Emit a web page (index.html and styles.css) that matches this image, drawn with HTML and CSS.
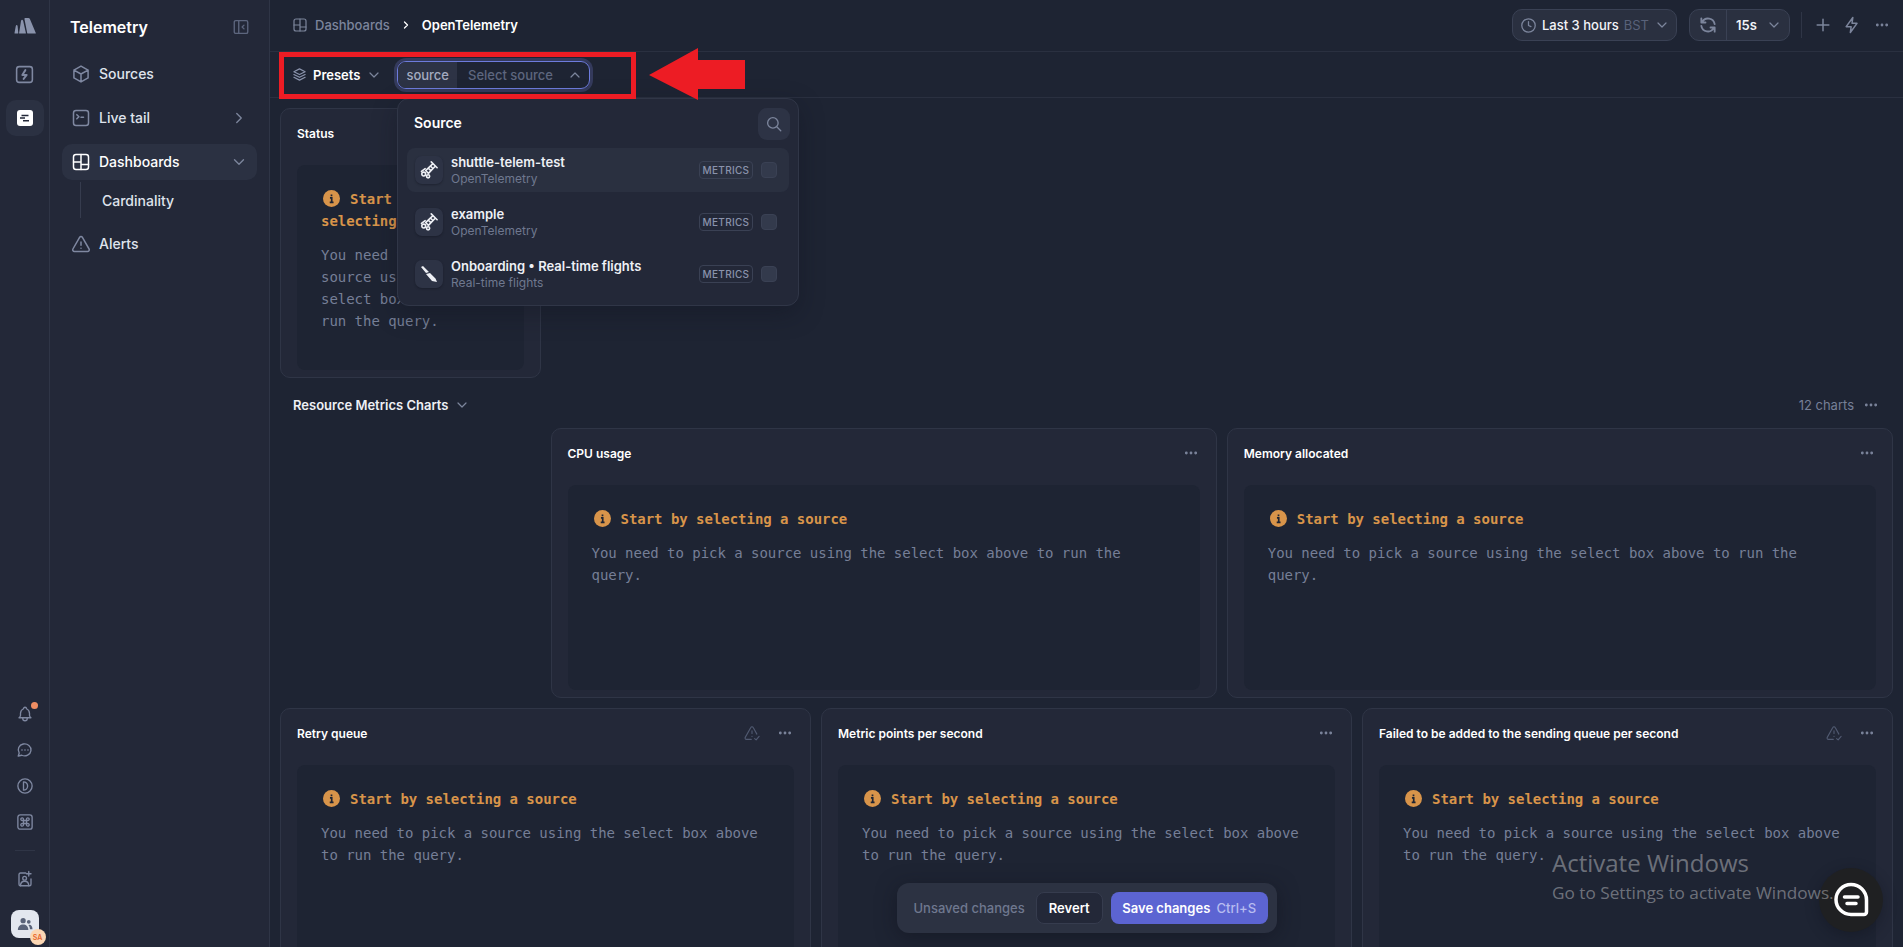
FILE: index.html
```html
<!DOCTYPE html>
<html lang="en">
<head>
    <meta charset="UTF-8">
    <title>OpenTelemetry - Dashboards</title>
    <link rel="stylesheet" href="styles.css">
</head>
<body>
    <svg class="sprite" width="0" height="0">
        <symbol id="i-grid" viewBox="0 0 24 24"><rect x="3" y="3" width="18" height="18" rx="3"/><path d="M12 3v18M3 12h9M12 15h9"/></symbol>
        <symbol id="i-chev-r" viewBox="0 0 24 24"><path d="M9 6l6 6-6 6"/></symbol>
        <symbol id="i-chev-d" viewBox="0 0 24 24"><path d="M6 9l6 6 6-6"/></symbol>
        <symbol id="i-chev-u" viewBox="0 0 24 24"><path d="M6 15l6-6 6 6"/></symbol>
        <symbol id="i-dots" viewBox="0 0 24 24"><circle cx="5" cy="12" r="1.200" fill="currentColor"/><circle cx="12" cy="12" r="1.200" fill="currentColor"/><circle cx="19" cy="12" r="1.200" fill="currentColor"/></symbol>
        <symbol id="i-warn" viewBox="0 0 24 24"><path d="M12 9v3.500M12 16.500v.1M11 20.500H4.500a1.800 1.800 0 0 1-1.500-2.700L10.400 4.600a1.800 1.800 0 0 1 3.200 0L18.500 13.500M15.500 19.500l2 1.700 4-4.700"/></symbol>
        <symbol id="i-info" viewBox="0 0 24 24"><circle cx="12" cy="12" r="12" fill="#d8944a" stroke="none"/><path d="M12 6.300v2.400M9.800 11h2.500v6.500M9.500 17.500h5.400" stroke="#1e2433" stroke-width="2.400" fill="none"/></symbol>
        <symbol id="i-otel" viewBox="0 0 16 16"><path d="M10 .8l5.200 5.200M11.500 2.300L5 8.500l2.500 2.500 6.200-6.500M9.300 4.500l2.200 2.200M7.400 6.400l2.200 2.200"/><circle cx="3.300" cy="11.600" r="1.700"/><circle cx="7.200" cy="13.600" r="1.400"/><path d="M1.300 9.300L4.600 6.800"/></symbol>
    </svg>

    <nav class="rail">
        <svg class="rail-logo" viewBox="0 0 22 16"><path d="M.5 15L1.800 8c.3-1.400 1.500-1.400 1.800 0l.7 7c0 .4-.2.600-.6.600H1.100c-.4 0-.7-.2-.6-.6z"/><path d="M5.100 15L7 3c.3-1.600 1.800-1.600 2.200 0l2.700 12c.1.400-.1.600-.5.600H5.600c-.4 0-.6-.2-.5-.6z"/><path d="M13.200 15L10.500 1.300C10.300.4 10.700 0 11.500 0h2.800c.8 0 1.300.3 1.600 1L21.800 15c.2.400 0 .6-.4.600h-7.600c-.3 0-.5-.2-.6-.6z"/></svg>
        <a class="rail-btn rail-btn-first">
            <svg class="icon" viewBox="0 0 24 24"><rect x="3" y="3" width="18" height="18" rx="3"/><path d="M13 7l-3.500 5.500h5L11 17" stroke-width="2.200"/></svg>
        </a>
        <a class="rail-btn active">
            <svg class="rail-mark" viewBox="0 0 16 16"><rect width="16" height="16" rx="3" fill="#fff"/><path d="M4.500 5.500h7M3 8h5M6 10.800h6" stroke="#232838" stroke-width="1.500"/></svg>
        </a>
        <div class="rail-spacer"></div>
        <a class="rail-btn rail-small bell">
            <svg class="icon" viewBox="0 0 24 24"><path d="M10 5a2 2 0 1 1 4 0 7 7 0 0 1 4 6v3a4 4 0 0 0 2 3H4a4 4 0 0 0 2-3v-3a7 7 0 0 1 4-6M9 17v1a3 3 0 0 0 6 0v-1"/></svg>
        </a>
        <a class="rail-btn rail-small">
            <svg class="icon" viewBox="0 0 24 24"><path d="M3 20l1.300-3.900A8.500 8 0 1 1 7.700 19z"/><path d="M8 12v.01M12 12v.01M16 12v.01" stroke-width="2.200"/></svg>
        </a>
        <a class="rail-btn rail-small">
            <svg class="icon" viewBox="0 0 24 24"><circle cx="12" cy="12" r="9.500"/><path d="M10 6.500a5.500 5.500 0 0 1 0 11z"/></svg>
        </a>
        <a class="rail-btn rail-small">
            <svg class="icon" viewBox="0 0 24 24"><rect x="2.500" y="2.500" width="19" height="19" rx="3"/><path d="M10 10V8.500A1.800 1.800 0 1 0 8.500 10H15.500A1.800 1.800 0 1 0 14 8.500V15.500A1.800 1.800 0 1 0 15.500 14H8.500A1.800 1.800 0 1 0 10 15.500z" stroke-width="1.800"/></svg>
        </a>
        <div class="rail-line"></div>
        <a class="rail-btn rail-small">
            <svg class="icon" viewBox="0 0 24 24"><path d="M13 4H6a2 2 0 0 0-2 2v13a2 2 0 0 0 2 2h12a2 2 0 0 0 2-2v-7M17 2v6M14 5h6"/><circle cx="11.500" cy="11" r="2.500"/><path d="M6 21c0-4 2.500-6 5.500-6s5.500 2 5.500 6"/></svg>
        </a>
        <div class="avatar">
            <svg viewBox="0 0 24 24" width="18" height="18"><circle cx="9.500" cy="7.500" r="3.500"/><circle cx="17" cy="9" r="2.500"/><path d="M2.500 20c0-5 3-7.500 7-7.500s7 2.500 7 7.500zM17.500 13c3 0 4.500 2.500 4.500 6h-3.500c0-2.300-.5-4.200-2-5.800z"/></svg>
            <span class="avatar-badge">SA</span>
        </div>
    </nav>

    <aside class="sidebar">
        <div class="side-title">
            <span>Telemetry</span>
            <svg class="icon collapse" viewBox="0 0 24 24"><rect x="3" y="3.500" width="18" height="17" rx="2"/><path d="M9 3.500v17M16 9.500l-2.500 2.500 2.500 2.500"/></svg>
        </div>
        <a class="nav-item">
            <svg class="icon" viewBox="0 0 24 24"><path d="M12 2.500l8.500 4.800v9.400L12 21.500l-8.500-4.800V7.300zM3.500 7.300L12 12l8.500-4.700M12 12v9.500"/></svg>
            <span>Sources</span>
        </a>
        <a class="nav-item">
            <svg class="icon" viewBox="0 0 24 24"><rect x="3" y="3" width="18" height="18" rx="3"/><path d="M7 8l2.500 2.500L7 13M12 11h3"/></svg>
            <span>Live tail</span>
            <svg class="icon chev"><use href="#i-chev-r"/></svg>
        </a>
        <a class="nav-item current">
            <svg class="icon"><use href="#i-grid"/></svg>
            <span>Dashboards</span>
            <svg class="icon chev"><use href="#i-chev-d"/></svg>
        </a>
        <div class="nav-sub"><a>Cardinality</a></div>
        <a class="nav-item">
            <svg class="icon" viewBox="0 0 24 24"><path d="M10.300 4l-8 14A2 2 0 0 0 4 21h16a2 2 0 0 0 1.700-3l-8-14a2 2 0 0 0-3.400 0zM12 9.500v4M12 17v.1"/></svg>
            <span>Alerts</span>
        </a>
    </aside>

    <main class="main">
        <header class="topbar">
            <svg class="icon crumb-icon"><use href="#i-grid"/></svg>
            <span class="crumb">Dashboards</span>
            <svg class="icon crumb-sep"><use href="#i-chev-r"/></svg>
            <span class="crumb-now">OpenTelemetry</span>
            <div class="top-right">
                <button class="pill time">
                    <svg class="icon" viewBox="0 0 24 24"><circle cx="12" cy="12" r="9.500"/><path d="M12 6.500V12l3.500 1.500"/></svg>
                    <span class="pill-text">Last 3 hours</span>
                    <span class="pill-dim">BST</span>
                    <svg class="icon chev"><use href="#i-chev-d"/></svg>
                </button>
                <div class="pill refresh">
                    <span class="refresh-icon">
                        <svg class="icon" viewBox="0 0 24 24"><path d="M20 11A8 8 0 0 0 5 8.500M4 4v5h5M4 13a8 8 0 0 0 15 2.500M20 20v-5h-5" stroke-width="2.200"/></svg>
                    </span>
                    <span class="refresh-rate">
                        <span class="pill-text bold">15s</span>
                        <svg class="icon chev"><use href="#i-chev-d"/></svg>
                    </span>
                </div>
                <div class="top-line"></div>
                <svg class="icon top-act" viewBox="0 0 24 24"><path d="M12 5v14M5 12h14"/></svg>
                <svg class="icon top-act" viewBox="0 0 24 24"><path d="M13 3L5 14h6l-1 7 8-11h-6z"/></svg>
                <svg class="icon top-dots dots"><use href="#i-dots"/></svg>
            </div>
        </header>

        <div class="presetbar">
            <svg class="icon layers" viewBox="0 0 24 24"><path d="M12 3l9 4.500-9 4.500-9-4.500zM3 12l9 4.500 9-4.500M3 16.500l9 4.500 9-4.500"/></svg>
            <span class="presets-label">Presets</span>
            <svg class="icon chev"><use href="#i-chev-d"/></svg>
            <div class="source-field">
                <span class="source-tag">source</span>
                <span class="source-value">Select source</span>
                <svg class="icon chev"><use href="#i-chev-u"/></svg>
            </div>
        </div>

        <div class="content">
            <div class="grid">
                <section class="card span-2">
                    <div class="card-head"><h3>Status</h3></div>
                    <div class="card-body">
                        <p class="prompt"><svg class="info"><use href="#i-info"/></svg>Start by selecting a source</p>
                        <p class="hint">You need to pick a source using the select box above to run the query.</p>
                    </div>
                </section>
            </div>

            <div class="section-head">
                <h2>Resource Metrics Charts</h2>
                <svg class="icon chev"><use href="#i-chev-d"/></svg>
                <span class="section-count">12 charts</span>
                <svg class="icon dots"><use href="#i-dots"/></svg>
            </div>

            <div class="grid">
                <section class="card span-5 offset-2">
                    <div class="card-head"><h3>CPU usage</h3><svg class="icon dots"><use href="#i-dots"/></svg></div>
                    <div class="card-body">
                        <p class="prompt"><svg class="info"><use href="#i-info"/></svg>Start by selecting a source</p>
                        <p class="hint">You need to pick a source using the select box above to run the query.</p>
                    </div>
                </section>
                <section class="card span-5">
                    <div class="card-head"><h3>Memory allocated</h3><svg class="icon dots"><use href="#i-dots"/></svg></div>
                    <div class="card-body">
                        <p class="prompt"><svg class="info"><use href="#i-info"/></svg>Start by selecting a source</p>
                        <p class="hint">You need to pick a source using the select box above to run the query.</p>
                    </div>
                </section>
                <section class="card span-4">
                    <div class="card-head"><h3>Retry queue</h3><svg class="icon warn"><use href="#i-warn"/></svg><svg class="icon dots"><use href="#i-dots"/></svg></div>
                    <div class="card-body">
                        <p class="prompt"><svg class="info"><use href="#i-info"/></svg>Start by selecting a source</p>
                        <p class="hint">You need to pick a source using the select box above to run the query.</p>
                    </div>
                </section>
                <section class="card span-4">
                    <div class="card-head"><h3>Metric points per second</h3><svg class="icon dots"><use href="#i-dots"/></svg></div>
                    <div class="card-body">
                        <p class="prompt"><svg class="info"><use href="#i-info"/></svg>Start by selecting a source</p>
                        <p class="hint">You need to pick a source using the select box above to run the query.</p>
                    </div>
                </section>
                <section class="card span-4">
                    <div class="card-head"><h3>Failed to be added to the sending queue per second</h3><svg class="icon warn"><use href="#i-warn"/></svg><svg class="icon dots"><use href="#i-dots"/></svg></div>
                    <div class="card-body">
                        <p class="prompt"><svg class="info"><use href="#i-info"/></svg>Start by selecting a source</p>
                        <p class="hint">You need to pick a source using the select box above to run the query.</p>
                    </div>
                </section>
            </div>
        </div>

        <div class="savebar">
            <span class="save-note">Unsaved changes</span>
            <button class="btn-revert">Revert</button>
            <button class="btn-save">Save changes <span>Ctrl+S</span></button>
        </div>
    </main>

    <!-- dropdown opened from the source field -->
    <div class="popup">
        <div class="popup-head">
            <span>Source</span>
            <button class="popup-search">
                <svg class="icon" viewBox="0 0 24 24"><circle cx="10.500" cy="10.500" r="7"/><path d="M16 16l5 5"/></svg>
            </button>
        </div>
        <div class="source-row hover">
            <span class="source-logo"><svg class="icon otel"><use href="#i-otel"/></svg></span>
            <div class="source-name"><strong>shuttle-telem-test</strong><small>OpenTelemetry</small></div>
            <span class="badge">METRICS</span>
            <span class="check"></span>
        </div>
        <div class="source-row">
            <span class="source-logo"><svg class="icon otel"><use href="#i-otel"/></svg></span>
            <div class="source-name"><strong>example</strong><small>OpenTelemetry</small></div>
            <span class="badge">METRICS</span>
            <span class="check"></span>
        </div>
        <div class="source-row">
            <span class="source-logo">
                <svg class="icon" viewBox="0 0 16 16"><path class="solid" d="M0 1L2 0l6 6-3 1zM5 8l4-1 5.500 5.500L16 16l-5-1z"/></svg>
            </span>
            <div class="source-name"><strong>Onboarding • Real-time flights</strong><small>Real-time flights</small></div>
            <span class="badge">METRICS</span>
            <span class="check"></span>
        </div>
    </div>

    <!-- annotation drawn on top of the screenshot -->
    <div class="mark-box"></div>
    <svg class="mark-arrow" viewBox="0 0 96 52"><path d="M0 27L49 0v12h47v29H49v11z"/></svg>

    <a class="chat-bubble">
        <svg viewBox="0 0 36 36" width="36" height="36"><path d="M18 2.500a15 15 0 0 0 0 30h13a2.500 2.500 0 0 0 2.500-2.500V18a15.500 15.500 0 0 0-15.500-15.500z"/><path d="M11.500 15H25M14 21.500h9" stroke-width="3.500"/></svg>
    </a>

    <div class="activate">
        <div class="activate-big">Activate Windows</div>
        <div class="activate-small">Go to Settings to activate Windows.</div>
    </div>
</body>
</html>
```

FILE: styles.css
```css
* {
    margin: 0;
    padding: 0;
    box-sizing: border-box;
}

html, body {
    height: 100%;
    overflow: hidden;
}

body {
    display: flex;
    position: relative;
    font-family: Inter, "Noto Sans", sans-serif;
    font-size: 14px;
    color: #e4e7ef;
    background: #1e2433;
}

button {
    font-family: inherit;
    color: inherit;
    border: none;
    background: none;
}

.sprite {
    position: absolute;
}

.icon {
    width: 16px;
    height: 16px;
    flex: none;
    fill: none;
    stroke: currentColor;
    stroke-width: 1.8;
    stroke-linecap: round;
    stroke-linejoin: round;
}

.chev {
    width: 16px;
    height: 16px;
    color: #7c859c;
}

.dots {
    color: #7c859c;
}

/* icon rail */
.rail {
    width: 50px;
    flex: none;
    display: flex;
    flex-direction: column;
    align-items: center;
    background: #232838;
    border-right: 1px solid #2f3546;
    padding-top: 18px;
}

.rail-logo {
    width: 22px;
    height: 16px;
    flex: none;
    fill: #8a93ac;
}

.rail-btn {
    width: 38px;
    height: 36px;
    display: flex;
    align-items: center;
    justify-content: center;
    border-radius: 10px;
    color: #7f88a1;
    position: relative;
}

.rail-btn .icon {
    width: 18px;
    height: 18px;
}

.rail-btn-first {
    margin-top: 22px;
}

.rail-btn-first .icon {
    width: 21px;
    height: 21px;
}

.rail-btn.active {
    margin-top: 8px;
    background: #2b3142;
}

.rail-mark {
    width: 16px;
    height: 16px;
}

.rail-spacer {
    flex: 1;
}

.bell::after {
    content: "";
    position: absolute;
    top: 6px;
    right: 6px;
    width: 7px;
    height: 7px;
    border-radius: 50%;
    background: #ee8d63;
}

.rail-line {
    width: 20px;
    height: 1px;
    background: #2f3546;
    margin: 10px 0 10px;
}

.avatar {
    width: 28px;
    height: 28px;
    margin: 13px 0 9px;
    border-radius: 8px;
    background: #e3e7ef;
    display: flex;
    align-items: center;
    justify-content: center;
    fill: #5a6379;
    position: relative;
}

.avatar-badge {
    position: absolute;
    right: -7px;
    bottom: -7px;
    width: 16px;
    height: 16px;
    border-radius: 50%;
    background: #fbd7b4;
    color: #e8662c;
    font-size: 7px;
    font-weight: 600;
    display: flex;
    align-items: center;
    justify-content: center;
}

/* sidebar */
.sidebar {
    width: 220px;
    flex: none;
    background: #232838;
    border-right: 1px solid #2f3546;
    padding: 0 12px;
    display: flex;
    flex-direction: column;
}

.side-title {
    height: 56px;
    padding: 0 7px 3px 8px;
    display: flex;
    align-items: center;
    justify-content: space-between;
    font-size: 16px;
    font-weight: 600;
    color: #fff;
}

.collapse {
    width: 18px;
    height: 18px;
    color: #5d667e;
}

.nav-item {
    height: 36px;
    margin-bottom: 8px;
    padding: 0 9px 0 9px;
    border-radius: 10px;
    display: flex;
    align-items: center;
    gap: 8px;
    font-weight: 500;
    color: #dfe3ec;
}

.nav-item span {
    padding-bottom: 2px;
}

.nav-item > .icon:first-child {
    width: 20px;
    height: 20px;
    color: #7f88a1;
}

.nav-item .chev {
    width: 18px;
    height: 18px;
    margin-left: auto;
}

.nav-item.current {
    background: #2b3142;
    margin-bottom: 2px;
    color: #fff;
}

.nav-item.current > .icon:first-child {
    color: #fff;
}

.nav-sub {
    margin: 0 0 8px 18px;
    height: 36px;
    padding-left: 21px;
    border-left: 1px solid #363c4e;
    display: flex;
    align-items: center;
    font-weight: 500;
    color: #dfe3ec;
}

/* main column */
.main {
    flex: 1;
    min-width: 0;
    display: flex;
    flex-direction: column;
    position: relative;
}

.topbar {
    height: 52px;
    flex: none;
    padding: 0 13px 1px 22px;
    display: flex;
    align-items: center;
    border-bottom: 1px solid #2a3040;
    font-size: 13px;
}

.crumb-icon {
    width: 16px;
    height: 16px;
    color: #7c859c;
}

.crumb {
    margin-left: 7px;
    color: #7c859c;
    font-weight: 500;
}

.crumb-sep {
    width: 12px;
    height: 12px;
    margin: 0 10px;
    color: #fff;
    stroke-width: 2.6;
}

.crumb-now {
    color: #fff;
    font-weight: 600;
}

.top-right {
    margin-left: auto;
    display: flex;
    align-items: center;
}

.pill {
    height: 32px;
    display: flex;
    align-items: center;
    background: #2a3040;
    border: 1px solid #3a4154;
    border-radius: 10px;
    font-size: 13px;
    white-space: nowrap;
}

.time {
    width: 165px;
    padding: 0 7px 0 7px;
    gap: 5px;
}

.time > .icon:first-child {
    width: 17px;
    height: 17px;
    color: #7c859c;
}

.time .chev {
    margin-left: auto;
}

.pill-text {
    color: #f2f4f8;
    font-weight: 500;
}

.pill-text.bold {
    font-weight: 600;
}

.pill-dim {
    color: #59627a;
}

.refresh {
    width: 101px;
    margin-left: 12px;
}

.refresh-icon {
    width: 37px;
    height: 100%;
    display: flex;
    align-items: center;
    justify-content: center;
    border-right: 1px solid #3a4154;
    color: #7c859c;
}

.refresh-icon .icon {
    width: 20px;
    height: 20px;
}

.refresh-rate {
    flex: 1;
    display: flex;
    align-items: center;
    justify-content: space-between;
    padding: 0 7px 0 9px;
}

.top-line {
    width: 1px;
    height: 26px;
    margin: 0 11px 0 11px;
    background: #2f3546;
}

.top-act {
    width: 20px;
    height: 20px;
    margin-right: 9px;
    color: #7c859c;
}

.top-dots {
    margin-left: 3px;
}

.presetbar {
    height: 46px;
    flex: none;
    padding: 0 0 0 22px;
    display: flex;
    align-items: center;
    border-bottom: 1px solid #2a3040;
    font-size: 13px;
}

.layers {
    width: 15px;
    height: 15px;
    color: #8a93ac;
}

.presets-label {
    margin-left: 6px;
    font-weight: 600;
    color: #fff;
}

.presetbar > .chev {
    margin: 0 15px 0 6px;
}

.source-field {
    width: 193px;
    height: 28px;
    padding-right: 6px;
    display: flex;
    align-items: center;
    border: 1.5px solid #6d7bdc;
    border-radius: 9px;
    box-shadow: 0 0 0 3px #343a5c;
    overflow: hidden;
}

.source-tag {
    align-self: stretch;
    padding: 0 8px;
    display: flex;
    align-items: center;
    background: #2d3345;
    color: #a4abc0;
    font-weight: 500;
}

.source-value {
    margin-left: 11px;
    color: #5d667e;
    font-weight: 500;
}

.source-field .chev {
    margin-left: auto;
}

.content {
    flex: 1;
    padding: 10px 10px 0;
}

.grid {
    display: grid;
    grid-template-columns: repeat(12, 1fr);
    grid-auto-rows: 270px;
    gap: 10px;
}

.span-2 { grid-column: span 2; }
.span-4 { grid-column: span 4; }
.span-5 { grid-column: span 5; }
.offset-2 { grid-column: 3 / span 5; }

.card {
    background: #232838;
    border: 1px solid #2f3546;
    border-radius: 10px;
    padding: 0 16px 7px;
    display: flex;
    flex-direction: column;
    min-width: 0;
}

.card-head {
    height: 48px;
    margin-bottom: 8px;
    padding-right: 1px;
    flex: none;
    display: flex;
    align-items: center;
    gap: 16px;
}

.card-head h3 {
    font-size: 12px;
    font-weight: 600;
    color: #fff;
    margin-right: auto;
}

.warn {
    width: 18px;
    height: 18px;
    color: #515a71;
    stroke-width: 1.5;
}

.card-body {
    flex: 1;
    padding: 23px 24px;
    background: #1e2433;
    border-radius: 8px;
    font-family: "DejaVu Sans Mono", "Liberation Mono", monospace;
    font-size: 14px;
    line-height: 22px;
    letter-spacing: -0.03px;
}

.prompt {
    color: #d8944a;
    font-weight: 700;
    margin-bottom: 12px;
}

.info {
    width: 17px;
    height: 17px;
    margin: 0 10px 0 2px;
    vertical-align: -3px;
}

.hint {
    color: #767f97;
}

.section-head {
    height: 50px;
    padding: 4px 14px 0 13px;
    display: flex;
    align-items: center;
    gap: 6px;
}

.section-head h2 {
    font-size: 13px;
    font-weight: 600;
    color: #eef0f5;
}

.section-count {
    margin-left: auto;
    margin-right: 3px;
    font-size: 13px;
    color: #767f97;
}

/* save bar */
.savebar {
    position: absolute;
    left: 50%;
    bottom: 14px;
    width: 380px;
    height: 50px;
    transform: translateX(-50%);
    padding: 0 9px 0 17px;
    display: flex;
    align-items: center;
    background: #2c3242;
    border-radius: 12px;
    font-size: 13px;
    white-space: nowrap;
    box-shadow: 0 4px 20px rgba(15, 18, 28, 0.5);
}

.save-note {
    color: #6f788f;
    font-weight: 500;
}

.btn-revert {
    width: 67px;
    height: 32px;
    margin-left: 11px;
    flex: none;
    background: #232838;
    border: 1px solid #363c4e;
    border-radius: 8px;
    font-size: 13px;
    font-weight: 600;
    color: #fff;
}

.btn-save {
    width: 157px;
    height: 32px;
    margin-left: 8px;
    flex: none;
    background: #5c64d2;
    border-radius: 8px;
    font-size: 13px;
    font-weight: 600;
    color: #fff;
}

.btn-save span {
    margin-left: 3px;
    font-weight: 500;
    color: #b7bcf0;
}

/* source dropdown */
.popup {
    position: absolute;
    left: 397px;
    top: 98px;
    width: 402px;
    height: 208px;
    padding: 0 9px;
    background: #232838;
    border: 1px solid #303647;
    border-radius: 12px;
    box-shadow: 0 8px 24px rgba(15, 18, 28, 0.35);
}

.popup-head {
    height: 49px;
    padding: 0 0 0 7px;
    display: flex;
    align-items: center;
    justify-content: space-between;
    font-weight: 600;
    color: #fff;
}

.popup-head > span {
    padding-bottom: 2px;
}

.popup-search {
    width: 32px;
    height: 32px;
    margin-right: -1px;
    display: flex;
    align-items: center;
    justify-content: center;
    background: #2d3345;
    border-radius: 9px;
    color: #7c859c;
}

.popup-search .icon {
    width: 18px;
    height: 18px;
}

.source-row {
    height: 44px;
    margin-bottom: 8px;
    padding: 0 12px 0 8px;
    display: flex;
    align-items: center;
    border-radius: 8px;
}

.source-row.hover {
    background: #2a3040;
}

.source-logo {
    width: 28px;
    height: 28px;
    flex: none;
    display: flex;
    align-items: center;
    justify-content: center;
    background: #2d3345;
    border-radius: 7px;
    box-shadow: 0 1px 2px rgba(15, 18, 28, 0.4);
    color: #eef0f5;
}

.source-logo .otel {
    width: 18px;
    height: 18px;
    stroke-width: 1.4;
}

.source-logo .solid {
    fill: #eef0f5;
    stroke: none;
}

.source-name {
    margin-left: 8px;
    flex: 1;
    display: flex;
    flex-direction: column;
}

.source-name strong {
    font-size: 13px;
    font-weight: 600;
    line-height: 17px;
    color: #eef0f5;
}

.source-name small {
    font-size: 12px;
    line-height: 16px;
    color: #6f788f;
}

.badge {
    width: 54px;
    height: 18px;
    display: flex;
    align-items: center;
    justify-content: center;
    border: 1px solid #3a4154;
    border-radius: 4px;
    font-size: 10px;
    font-weight: 500;
    letter-spacing: 0.3px;
    color: #8a93ac;
}

.check {
    width: 16px;
    height: 16px;
    margin-left: 8px;
    background: #333a4c;
    border: 1px solid #3a4154;
    border-radius: 4px;
}

/* red annotation */
.mark-box {
    position: absolute;
    left: 279px;
    top: 52px;
    width: 357px;
    height: 47px;
    border: 5px solid #ed1c24;
}

.mark-arrow {
    position: absolute;
    left: 649px;
    top: 48px;
    width: 96px;
    height: 52px;
    fill: #ed1c24;
}

/* windows watermark */
.activate {
    position: absolute;
    left: 1552px;
    top: 847px;
    font-family: "Open Sans", "Noto Sans", sans-serif;
    color: rgba(255, 255, 255, 0.36);
    pointer-events: none;
}

.activate-big {
    font-size: 24px;
    line-height: 32px;
}

.activate-small {
    font-size: 17.2px;
    line-height: 28px;
    white-space: nowrap;
}

.chat-bubble {
    position: absolute;
    left: 1819px;
    top: 868px;
    width: 64px;
    height: 64px;
    display: flex;
    align-items: center;
    justify-content: center;
    border-radius: 50%;
    background: #1f2022;
    box-shadow: 0 4px 14px rgba(15, 18, 28, 0.4);
    fill: none;
    stroke: #fff;
    stroke-width: 3.5;
    stroke-linecap: round;
    stroke-linejoin: round;
}
```
